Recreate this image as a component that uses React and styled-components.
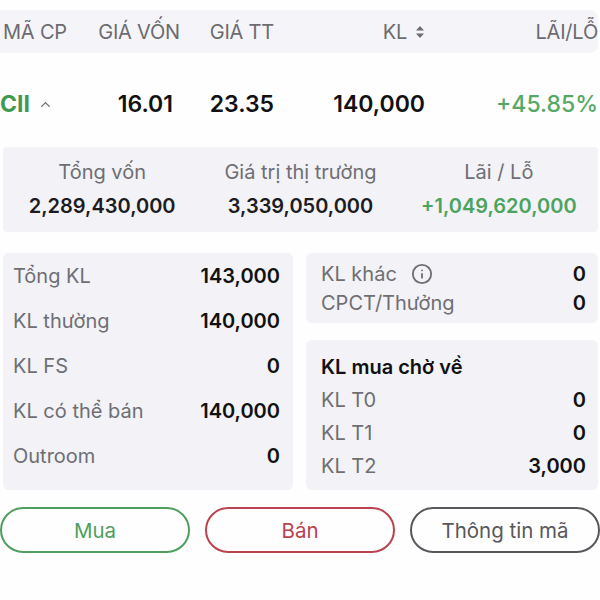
import React from 'react';
import styled, { createGlobalStyle } from 'styled-components';
import { ChevronUp, Info } from 'lucide-react';

const GlobalStyle = createGlobalStyle`
  body {
    margin: 0;
    background: #fefefe;
    font-family: Inter, "Noto Sans", "Liberation Sans", sans-serif;
    -webkit-font-smoothing: antialiased;
  }
`;

const Page = styled.div`
  width: 600px;
  height: 600px;
  padding-top: 10px;
  box-sizing: border-box;
  overflow: hidden;
`;

const columns = '92px 88px 94px 151px 175px';

const HeaderBar = styled.div`
  width: 598px;
  height: 43px;
  background: #f5f5f9;
  border-radius: 0 8px 8px 0;
  display: grid;
  grid-template-columns: ${columns};
  align-items: center;
  font-size: 20px;
  color: #6b6b70;
  letter-spacing: -0.2px;
`;

const HeadCell = styled.div`
  display: flex;
  align-items: center;
  justify-content: ${(p) => (p.$right ? 'flex-end' : 'flex-start')};
  padding-left: ${(p) => p.$pl || 0}px;
  padding-right: ${(p) => p.$pr || 0}px;
  white-space: nowrap;
`;

const DataRow = styled.div`
  margin-top: 21px;
  height: 60px;
  display: grid;
  grid-template-columns: ${columns};
  align-items: center;
  font-size: 23px;
  font-weight: 600;
  color: #111;
`;

const Cell = styled.div`
  display: flex;
  align-items: center;
  justify-content: ${(p) => (p.$right ? 'flex-end' : 'flex-start')};
  padding-right: ${(p) => p.$pr || 0}px;
  color: ${(p) => p.$color || 'inherit'};
  font-weight: ${(p) => p.$weight || 600};
  white-space: nowrap;
`;

const Symbol = styled.span`
  color: #3f994e;
  font-weight: 700;
  margin-right: 8px;
`;

const SortIcon = () => (
  <svg width="10" height="14" viewBox="0 0 10 14" style={{ marginLeft: 8 }}>
    <path d="M5 1 L9 5.5 H1 Z" fill="#6b6b70" />
    <path d="M5 13 L9 8.5 H1 Z" fill="#6b6b70" />
  </svg>
);

const SummaryCard = styled.div`
  margin: 13px 0 0 3px;
  width: 595px;
  height: 85px;
  box-sizing: border-box;
  padding-top: 13px;
  background: #f2f2f7;
  border-radius: 4px;
  display: grid;
  grid-template-columns: repeat(3, 1fr);
`;

const SummaryCol = styled.div`
  display: flex;
  flex-direction: column;
  align-items: center;
  gap: 10px;
`;

const SummaryLabel = styled.div`
  font-size: 20px;
  line-height: 24px;
  color: #6e6e73;
`;

const SummaryValue = styled.div`
  font-size: 20px;
  line-height: 24px;
  font-weight: 600;
  color: ${(p) => p.$color || '#1c1c1e'};
`;

const Lower = styled.div`
  margin: 21px 0 0 3px;
  display: grid;
  grid-template-columns: 290px 292px;
  column-gap: 13px;
`;

const Card = styled.div`
  background: #f2f2f7;
  border-radius: 6px;
  box-sizing: border-box;
  padding: ${(p) => p.$pad};
  height: ${(p) => p.$h}px;
`;

const RightStack = styled.div`
  display: flex;
  flex-direction: column;
  gap: 17px;
`;

const Row = styled.div`
  height: ${(p) => p.$h}px;
  display: flex;
  align-items: center;
  justify-content: space-between;
  font-size: 20px;
`;

const Label = styled.span`
  display: flex;
  align-items: center;
  color: #6e6e73;
`;

const Value = styled.span`
  font-weight: 600;
  color: #111;
`;

const Title = styled.div`
  height: 33px;
  display: flex;
  align-items: center;
  font-size: 20px;
  font-weight: 600;
  color: #111;
`;

const Buttons = styled.div`
  margin-top: 17px;
  display: grid;
  grid-template-columns: repeat(3, 190px);
  column-gap: 15px;
`;

const Button = styled.button`
  height: 46px;
  border-radius: 23px;
  border: 2px solid ${(p) => p.$color};
  background: transparent;
  color: ${(p) => p.$color};
  font-family: inherit;
  font-size: 20.5px;
  padding: 0;
`;

const leftRows = [
  ['Tổng KL', '143,000'],
  ['KL thường', '140,000'],
  ['KL FS', '0'],
  ['KL có thể bán', '140,000'],
  ['Outroom', '0'],
];

const pendingRows = [
  ['KL T0', '0'],
  ['KL T1', '0'],
  ['KL T2', '3,000'],
];

export default function App() {
  return (
    <Page>
      <GlobalStyle />
      <HeaderBar>
        <HeadCell $pl={3}>MÃ CP</HeadCell>
        <HeadCell $right>GIÁ VỐN</HeadCell>
        <HeadCell $right>GIÁ TT</HeadCell>
        <HeadCell $right>
          KL
          <SortIcon />
        </HeadCell>
        <HeadCell $right $pr={2}>LÃI/LỖ</HeadCell>
      </HeaderBar>

      <DataRow>
        <Cell>
          <Symbol>CII</Symbol>
          <ChevronUp size={15} strokeWidth={2} color="#6b6b70" />
        </Cell>
        <Cell $right $pr={7}>16.01</Cell>
        <Cell $right>23.35</Cell>
        <Cell $right>140,000</Cell>
        <Cell $right $pr={2} $color="#55a866" $weight={500}>+45.85%</Cell>
      </DataRow>

      <SummaryCard>
        <SummaryCol>
          <SummaryLabel>Tổng vốn</SummaryLabel>
          <SummaryValue>2,289,430,000</SummaryValue>
        </SummaryCol>
        <SummaryCol>
          <SummaryLabel>Giá trị thị trường</SummaryLabel>
          <SummaryValue>3,339,050,000</SummaryValue>
        </SummaryCol>
        <SummaryCol>
          <SummaryLabel>Lãi / Lỗ</SummaryLabel>
          <SummaryValue $color="#4ca35e">+1,049,620,000</SummaryValue>
        </SummaryCol>
      </SummaryCard>

      <Lower>
        <Card $h={237} $pad="0 13px 0 10px">
          {leftRows.map(([l, v]) => (
            <Row key={l} $h={45}>
              <Label>{l}</Label>
              <Value>{v}</Value>
            </Row>
          ))}
        </Card>
        <RightStack>
          <Card $h={70} $pad="6px 12px 0 15px">
            <Row $h={29}>
              <Label>
                KL khác
                <Info size={22} strokeWidth={2} color="#6e6e73" style={{ marginLeft: 14 }} />
              </Label>
              <Value>0</Value>
            </Row>
            <Row $h={29}>
              <Label>CPCT/Thưởng</Label>
              <Value>0</Value>
            </Row>
          </Card>
          <Card $h={150} $pad="10px 12px 0 15px">
            <Title>KL mua chờ về</Title>
            {pendingRows.map(([l, v]) => (
              <Row key={l} $h={33}>
                <Label>{l}</Label>
                <Value>{v}</Value>
              </Row>
            ))}
          </Card>
        </RightStack>
      </Lower>

      <Buttons>
        <Button $color="#4f9e5f">Mua</Button>
        <Button $color="#b9434e">Bán</Button>
        <Button $color="#58585c">Thông tin mã</Button>
      </Buttons>
    </Page>
  );
}
